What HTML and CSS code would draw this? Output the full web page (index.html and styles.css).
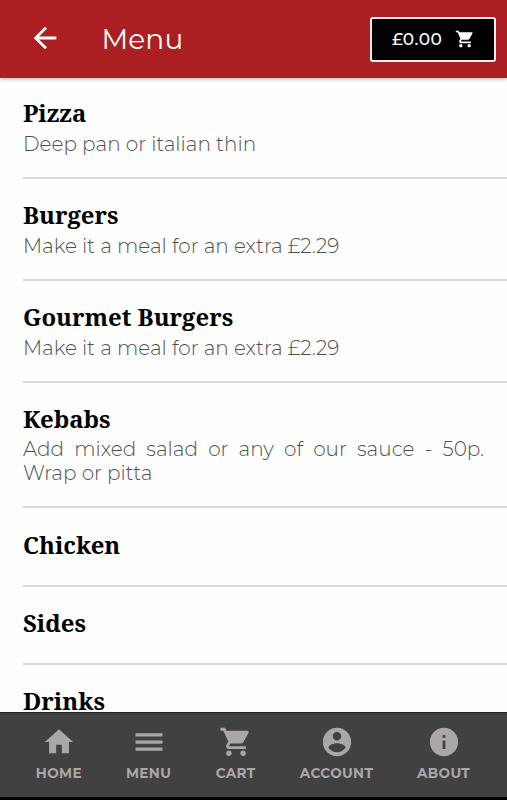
FILE: index.html
```
<!DOCTYPE html>
<html lang="en">
<head>
    <meta charset="UTF-8">
    <meta name="viewport" content="width=device-width, initial-scale=1.0">
    <title>Menu</title>
    <link rel="stylesheet" href="styles.css">
</head>
<body>
    <header class="header">
        <a href="#" class="back" aria-label="Back">
            <svg viewBox="0 0 24 24"><path d="M20 11H7.83l5.59-5.59L12 4l-8 8 8 8 1.41-1.41L7.83 13H20v-2z"/></svg>
        </a>
        <h1>Menu</h1>
        <a href="#" class="basket">
            <span class="total">£0.00</span>
            <svg viewBox="0 0 24 24"><path d="M7 18c-1.1 0-1.99.9-1.99 2S5.9 22 7 22s2-.9 2-2-.9-2-2-2zM1 2v2h2l3.6 7.59-1.35 2.45c-.16.28-.25.61-.25.96 0 1.1.9 2 2 2h12v-2H7.42c-.14 0-.25-.11-.25-.25l.03-.12.9-1.63h7.45c.75 0 1.41-.41 1.75-1.03l3.58-6.49A1 1 0 0 0 20 4H5.21l-.94-2H1zm16 16c-1.1 0-1.99.9-1.99 2s.89 2 1.99 2 2-.9 2-2-.9-2-2-2z"/></svg>
        </a>
    </header>

    <main class="list">
        <section class="item">
            <h2>Pizza</h2>
            <p>Deep pan or italian thin</p>
        </section>
        <section class="item">
            <h2>Burgers</h2>
            <p>Make it a meal for an extra £2.29</p>
        </section>
        <section class="item">
            <h2>Gourmet Burgers</h2>
            <p>Make it a meal for an extra £2.29</p>
        </section>
        <section class="item">
            <h2>Kebabs</h2>
            <p>Add mixed salad or any of our sauce - 50p. Wrap or pitta</p>
        </section>
        <section class="item">
            <h2>Chicken</h2>
        </section>
        <section class="item">
            <h2>Sides</h2>
        </section>
        <section class="item">
            <h2>Drinks</h2>
        </section>
    </main>

    <nav class="tabs">
        <a href="#" class="tab">
            <svg viewBox="0 0 24 24"><path d="M10 20v-6h4v6h5v-8h3L12 3 2 12h3v8z"/></svg>
            <span>HOME</span>
        </a>
        <a href="#" class="tab">
            <svg viewBox="0 0 24 24"><path d="M2.5 18.2h19v-2.3h-19v2.3zm0-5h19v-2.3h-19v2.3zm0-7.4v2.3h19V5.8h-19z"/></svg>
            <span>MENU</span>
        </a>
        <a href="#" class="tab">
            <svg viewBox="0 0 24 24"><path d="M7 18c-1.1 0-1.99.9-1.99 2S5.9 22 7 22s2-.9 2-2-.9-2-2-2zM1 2v2h2l3.6 7.59-1.35 2.45c-.16.28-.25.61-.25.96 0 1.1.9 2 2 2h12v-2H7.42c-.14 0-.25-.11-.25-.25l.03-.12.9-1.63h7.45c.75 0 1.41-.41 1.75-1.03l3.58-6.49A1 1 0 0 0 20 4H5.21l-.94-2H1zm16 16c-1.1 0-1.99.9-1.99 2s.89 2 1.99 2 2-.9 2-2-.9-2-2-2z"/></svg>
            <span>CART</span>
        </a>
        <a href="#" class="tab">
            <svg viewBox="0 0 24 24"><path d="M12 2C6.48 2 2 6.48 2 12s4.48 10 10 10 10-4.48 10-10S17.52 2 12 2zm0 3c1.66 0 3 1.34 3 3s-1.34 3-3 3-3-1.34-3-3 1.34-3 3-3zm0 14.2c-2.5 0-4.71-1.28-6-3.22.03-1.99 4-3.08 6-3.08 1.99 0 5.97 1.09 6 3.08-1.29 1.94-3.5 3.22-6 3.22z"/></svg>
            <span>ACCOUNT</span>
        </a>
        <a href="#" class="tab">
            <svg viewBox="0 0 24 24"><path d="M12 2C6.48 2 2 6.48 2 12s4.48 10 10 10 10-4.48 10-10S17.52 2 12 2zm1 15h-2v-6h2v6zm0-8h-2V7h2v2z"/></svg>
            <span>ABOUT</span>
        </a>
    </nav>
</body>
</html>
```
FILE: styles.css
```
:root {
    --red: #ab1f23;
    --bar: #414141;
    --muted: #aba7a7;
    --line: #dadada;
    --sans: 'Montserrat', 'Inter', sans-serif;
    --serif: 'Noto Serif', 'DejaVu Serif Condensed', 'DejaVu Serif', serif;
}

* {
    margin: 0;
    padding: 0;
    box-sizing: border-box;
}

body {
    height: 100vh;
    display: flex;
    flex-direction: column;
    overflow: hidden;
    background: #fefefe;
    font-family: var(--sans);
}

a {
    color: inherit;
    text-decoration: none;
}

svg {
    display: block;
    fill: currentColor;
}

.header {
    flex: none;
    display: flex;
    align-items: center;
    height: 78px;
    padding: 0 11px 0 28px;
    background: var(--red);
    color: #fff;
    box-shadow: 0 1px 4px rgba(0, 0, 0, 0.3);
    z-index: 1;
}

.back svg {
    width: 34px;
    height: 34px;
    margin-bottom: 2px;
}

.header h1 {
    margin-left: 39.5px;
    font-size: 28px;
    font-weight: 400;
    letter-spacing: 0.1px;
}

.basket {
    display: flex;
    align-items: center;
    justify-content: space-between;
    width: 126px;
    height: 45px;
    margin-left: auto;
    padding: 0 19px 0 20px;
    background: #000;
    border: 2px solid #fbeeee;
    border-radius: 3px;
}

.total {
    font-size: 17px;
    font-weight: 500;
    letter-spacing: 0.5px;
}

.basket svg {
    width: 20px;
    height: 20px;
}

.list {
    flex: 1;
    min-height: 0;
    margin-top: -1px;
    overflow: hidden;
}

.item {
    margin-left: 23px;
    padding: 19.3px 23px 20.3px 0;
    border-bottom: 2px solid var(--line);
}

.item h2 {
    font-family: var(--serif);
    font-size: 23.9px;
    font-weight: 700;
    line-height: 33px;
}

.item p {
    margin-top: 3.5px;
    font-size: 20px;
    font-weight: 300;
    line-height: 23.8px;
    color: #505050;
    text-align: justify;
}

.item h2:only-child {
    padding-bottom: 3.8px;
}

.tabs {
    flex: none;
    display: flex;
    justify-content: center;
    gap: 43.6px;
    height: 88px;
    padding: 12px 1px 0 0;
    background: var(--bar);
    border-top: 1px solid #222;
    border-bottom: 3px solid #000;
    color: var(--muted);
}

.tab {
    display: flex;
    flex-direction: column;
    align-items: center;
    min-width: 46px;
}

.tab:nth-child(3) {
    min-width: 41px;
}

.tab svg {
    width: 34px;
    height: 34px;
}

.tab span {
    margin-top: 6px;
    font-size: 13.6px;
    font-weight: 700;
    line-height: 16px;
    letter-spacing: 0.4px;
}
```
